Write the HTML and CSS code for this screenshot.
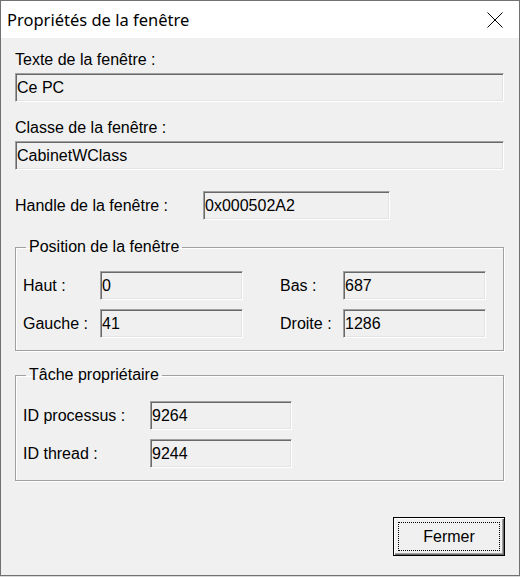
FILE: index.html
```html
<!DOCTYPE html>
<html lang="fr">
<head>
<meta charset="utf-8">
<title>Propriétés de la fenêtre</title>
<link rel="stylesheet" href="styles.css">
</head>
<body>
<div class="window">
  <div class="titlebar">
    <span class="title">Propriétés de la fenêtre</span>
    <svg class="close" width="16" height="16" viewBox="0 0 16 16"><path d="M0.5 0.5 L15.5 15.5 M15.5 0.5 L0.5 15.5" stroke="#000" stroke-width="1" fill="none"/></svg>
  </div>
  <div class="content">
    <div class="label">Texte de la fenêtre :</div>
    <div class="edit wide">Ce PC</div>
    <div class="label second">Classe de la fenêtre :</div>
    <div class="edit wide">CabinetWClass</div>
    <div class="handle-row">
      <span class="handle-label">Handle de la fenêtre :</span>
      <div class="edit handle">0x000502A2</div>
    </div>
    <fieldset class="group pos-group">
      <legend>Position de la fenêtre</legend>
      <div class="pos-grid">
        <span class="field-label">Haut :</span>
        <div class="edit small">0</div>
        <span class="field-label">Bas :</span>
        <div class="edit small">687</div>
        <span class="field-label">Gauche :</span>
        <div class="edit small">41</div>
        <span class="field-label">Droite :</span>
        <div class="edit small">1286</div>
      </div>
    </fieldset>
    <fieldset class="group task-group">
      <legend>Tâche propriétaire</legend>
      <div class="task-grid">
        <span class="field-label">ID processus :</span>
        <div class="edit small">9264</div>
        <span class="field-label">ID thread :</span>
        <div class="edit small">9244</div>
      </div>
    </fieldset>
    <div class="actions">
      <button class="btn">Fermer</button>
    </div>
  </div>
</div>
</body>
</html>
```

FILE: styles.css
```css
html, body {
  margin: 0;
  padding: 0;
}
body {
  width: 520px;
  height: 577px;
  background: #d9d9d9;
  font-family: "Liberation Sans", Arial, sans-serif;
  font-size: 16px;
  color: #000;
  overflow: hidden;
}
.window {
  box-sizing: border-box;
  width: 520px;
  height: 576px;
  border: 1px solid #717171;
  background: #f0f0f0;
  display: flex;
  flex-direction: column;
}
.titlebar {
  height: 37px;
  background: #fff;
  display: flex;
  align-items: center;
  justify-content: space-between;
  padding-left: 6px;
  padding-right: 16px;
  flex: none;
}
.title {
  font-family: "Noto Sans", "Open Sans", sans-serif;
  font-size: 16.5px;
  color: #000;
}
.close {
  display: block;
}
.content {
  padding: 13px 15px 0 14px;
  display: flex;
  flex-direction: column;
}
.label {
  line-height: 18px;
}
.label.second {
  margin-top: 17px;
}
.edit {
  box-sizing: border-box;
  height: 29px;
  line-height: 27px;
  padding-left: 1px;
  background: #f0f0f0;
  border-top: 1px solid #a0a0a0;
  border-left: 1px solid #a0a0a0;
  border-right: 1px solid #fff;
  border-bottom: 1px solid #fff;
  box-shadow: inset 1px 1px 0 #696969, inset -1px -1px 0 #e3e3e3;
  white-space: nowrap;
}
.edit.wide {
  margin-top: 4px;
}
.handle-row {
  margin-top: 21px;
  display: flex;
  align-items: center;
}
.handle-label {
  width: 188px;
}
.edit.handle {
  width: 187px;
}
.group {
  margin: 0;
  min-width: 0;
  border: 1px solid #a0a0a0;
  box-shadow: inset 1px 1px 0 #fff, 1px 1px 0 #fff;
  padding: 0 0 12px 7px;
}
.group legend {
  margin-left: 3px;
  padding: 0 3px;
  line-height: 18px;
}
.pos-group {
  margin-top: 18px;
  padding-top: 15px;
}
.task-group {
  margin-top: 15px;
  padding-top: 17px;
}
.pos-grid {
  display: grid;
  grid-template-columns: 77px 180px 63px 143px;
  grid-auto-rows: 29px;
  row-gap: 9px;
  align-items: center;
}
.task-grid {
  display: grid;
  grid-template-columns: 127px 142px;
  grid-auto-rows: 29px;
  row-gap: 9px;
  align-items: center;
}
.pos-grid .edit.small {
  width: 143px;
}
.task-grid .edit.small {
  width: 142px;
}
.actions {
  margin-top: 36px;
  margin-right: -1px;
  display: flex;
  justify-content: flex-end;
}
.btn {
  position: relative;
  box-sizing: border-box;
  width: 112px;
  height: 39px;
  padding: 0;
  font-family: "Liberation Sans", Arial, sans-serif;
  font-size: 16px;
  color: #000;
  background: #f0f0f0;
  border: 1px solid #000;
  box-shadow: inset 1px 1px 0 #fff, inset -1px -1px 0 #696969, inset -2px -2px 0 #a0a0a0;
}
.btn::after {
  content: "";
  position: absolute;
  top: 4px;
  left: 4px;
  right: 4px;
  bottom: 4px;
  border: 1px dotted #000;
}
```
